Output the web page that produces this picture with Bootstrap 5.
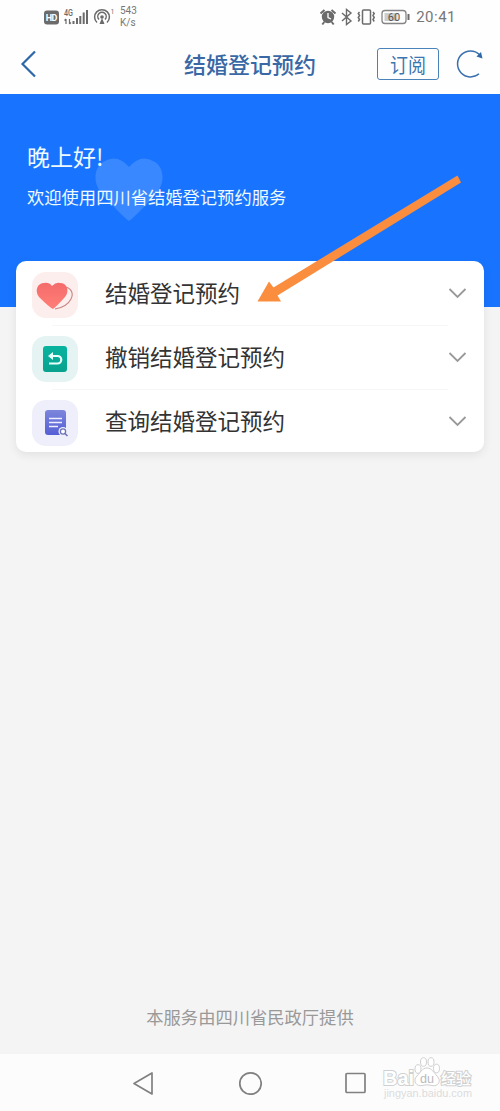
<!DOCTYPE html>
<html lang="zh-CN">
<head>
<meta charset="utf-8">
<meta name="viewport" content="width=device-width, initial-scale=1">
<title>结婚登记预约</title>
<link href="https://cdn.jsdelivr.net/npm/bootstrap@5.3.0/dist/css/bootstrap.min.css" rel="stylesheet">
<style>
body{font-family:"Liberation Sans","Noto Sans CJK SC",sans-serif;background:#f4f4f4;height:1111px;overflow:hidden}
.cjk{font-family:"Noto Sans CJK SC",sans-serif}
svg{display:block;flex:none}
.status{height:34px;padding:0 44px 0 43px;background:#fefefe;color:#777;font-family:Roboto,sans-serif}
.speed{font-size:10px;line-height:12px;padding-left:6px}
.clock{font-size:15px;letter-spacing:.5px;line-height:34px;padding-left:5px}
.topbar{height:60px;background:#fefefe;padding:0 16px 0 20px;color:#316aad}
.page-title{font-size:22px;font-weight:500;line-height:58px;height:60px;margin-left:148px;color:#3968a5}
.sub-btn{width:62px;height:32px;border:1.5px solid #4a83b8;border-radius:3px;color:#3a76b0;font-size:18px;line-height:28px;padding:0;margin-left:61px;margin-right:15px}
.sub-btn span{display:inline-block;transform:scaleY(1.12)}
.hero{height:213px;background:#1874ff;color:#eefaff;padding:44px 27px 0}
.hero h1{font-size:23px;line-height:36px;font-weight:400;margin:0}
.hero p{font-size:17.3px;line-height:26px;margin:10px 0 0}
.heart-bg{left:94px;top:62px}
.svc{margin:-46px 16px 0;border:0;border-radius:10px;box-shadow:0 3px 10px rgba(0,0,0,.08);height:191px;z-index:1}
.svc-row{height:64px;padding:0 17px 0 16px;color:#333;font-size:22.5px}
.svc-row span{line-height:62px;height:64px}
.svc-row+.svc-row{background:linear-gradient(#f7f7f7,#f7f7f7) 36px 0/396px 1px no-repeat}
.tile{width:46px;height:46px;border-radius:14px;margin:4px 27px 0 0}
.t-red{background:#fceeed}.t-green{background:#e5f4f3}.t-blue{background:#eeeffa}
.pointer{left:250px;top:170px;z-index:3;pointer-events:none}
.provider{font-size:17.3px;line-height:26px;color:#999;margin-bottom:24px}
.sysnav{height:57px;background:#fcfcfc}
.sysnav .keys{padding-left:132px;gap:83.5px;height:57px}
.wmark{left:379px;bottom:8px}
</style>
</head>
<body class="d-flex flex-column position-relative">
<div class="status d-flex align-items-center">
  <svg width="71" height="34" viewBox="43 0 71 34" fill="none" stroke="#6b6b6b">
    <rect x="44" y="10.500" width="15" height="14" rx="3" fill="#6b6b6b" stroke="none"/>
    <text x="45.800" y="21" font-size="9" font-weight="700" fill="#fff" stroke="none" textLength="11.5">HD</text>
    <text x="64" y="16" font-size="8.500" font-weight="500" fill="#6b6b6b" stroke="none" textLength="9" lengthAdjust="spacingAndGlyphs">4G</text>
    <path d="M66 24v-5m-1.500 1.500L66 19m3.500 0v5m1.500-1.500L69.500 24" stroke-width="1.200"/>
    <path d="M73.500 24v-3M77 24v-6M80.300 24v-8M83.700 24V12.500M87 24V10" stroke-width="2"/>
    <path d="M97 22.500a7.400 7.400 0 1 1 10 0M99 19.500a4.200 4.200 0 1 1 6 0" stroke-width="1.500"/>
    <circle cx="102" cy="17" r="1.800" fill="#6b6b6b" stroke="none"/><path d="M102 18l-2.500 6h5z" fill="#6b6b6b" stroke="none"/>
    <text x="110.500" y="14" font-size="7" fill="#777" stroke="none">1</text>
  </svg>
  <div class="speed">543<br>K/s</div>
  <svg class="ms-auto" width="93" height="34" viewBox="317.500 0 93 34" fill="none" stroke="#6b6b6b" stroke-width="1.500">
    <circle cx="327.500" cy="17" r="6.200" fill="#6b6b6b" stroke="none"/><path d="M320 13.500l4-3.500m11 3.500l-4-3.500m-7.200 12l-2 2.500m9.400-2.500l2 2.500" stroke-width="2"/><path d="M327.500 13v4.500l3 1.500" stroke="#fff" stroke-width="1.300"/>
    <path d="M341.500 13l9 8-4.500 3.500V9.500l4.500 3.500-9 8" stroke-width="1.400"/>
    <rect x="362" y="10" width="8" height="14" rx="1"/><path d="M359 12l-1.200 1.500 1.200 2-1.200 2 1.200 2-1.200 2m14.700-9.500l1.200 1.500-1.200 2 1.200 2-1.200 2 1.200 2" stroke-width="1.500"/>
    <rect x="381.500" y="10.500" width="24" height="13" rx="3" stroke="#858585" stroke-width="1.300"/><rect x="384" y="13" width="13" height="8" fill="#ccc" stroke="none"/>
    <text x="387.300" y="21" font-size="11" fill="#555" stroke="none">60</text><path d="M408 14v6" stroke-width="2"/>
  </svg>
  <div class="clock">20:41</div>
</div>
<header class="topbar d-flex align-items-center">
  <svg width="16" height="30" viewBox="0 0 16 30" fill="none" stroke="#2e68a8" stroke-width="2.200"><path d="M15 2.500L2.500 15 15 27.500"/></svg>
  <div class="page-title cjk text-nowrap">结婚登记预约</div>
  <button class="btn sub-btn cjk"><span>订阅</span></button>
  <svg width="30" height="32" viewBox="454 48 30 32"><path d="M479.500 54.500A13 13 0 1 0 479 73.800" fill="none" stroke="#3a70ad" stroke-width="1.500"/><path d="M476.500 56.500l4.500-4.500 1.500 6.500z" fill="#2e68a8"/></svg>
</header>
<section class="hero position-relative cjk">
  <svg class="heart-bg position-absolute" width="70" height="66" viewBox="0 0 70 66"><path d="M35 65Q29 61 9 39C-2 27 0 12 9 6Q23-3 35 11Q47-3 61 6C70 12 72 27 61 39Q41 61 35 65Z" fill="#fff" fill-opacity=".15"/></svg>
  <h1 class="position-relative">晚上好!</h1>
  <p class="position-relative text-nowrap">欢迎使用四川省结婚登记预约服务</p>
</section>
<main class="card svc cjk">
  <div class="svc-row d-flex align-items-center">
    <svg class="tile t-red" viewBox="0 0 46 46"><defs><linearGradient id="gr" x2="0" y2="1"><stop stop-color="#f46c6a"/><stop offset="1" stop-color="#ff7f78"/></linearGradient></defs><path d="M33 15C39 16 42 21 39 27Q35 35 23 37" fill="none" stroke="#c98582" stroke-width="1.100"/><path d="M21 37Q17 35 7 25C2 18 6 11 12 11Q17 10 20 14Q24 10 28 11C35 11 38 19 33 25Q25 34 21 37Z" fill="url(#gr)"/></svg>
    <span>结婚登记预约</span>
    <svg class="ms-auto" width="19" height="12" viewBox="0 0 19 12" fill="none" stroke="#999" stroke-width="1.800"><path d="M1.500 2l8 8 8-8"/></svg>
  </div>
  <div class="svc-row d-flex align-items-center">
    <svg class="tile t-green" viewBox="0 0 46 46"><defs><linearGradient id="gg" x2="0" y2="1"><stop stop-color="#08b49f"/><stop offset="1" stop-color="#08a28e"/></linearGradient></defs><rect x="11" y="10" width="24" height="26" rx="3" fill="url(#gg)"/><path d="M18 20H25.500a3.500 3.500 0 0 1 0 7.500H17" fill="none" stroke="#e8fffb" stroke-width="2.200"/><path d="M16 20l5-4v8z" fill="#e8fffb"/></svg>
    <span>撤销结婚登记预约</span>
    <svg class="ms-auto" width="19" height="12" viewBox="0 0 19 12" fill="none" stroke="#999" stroke-width="1.800"><path d="M1.500 2l8 8 8-8"/></svg>
  </div>
  <div class="svc-row d-flex align-items-center">
    <svg class="tile t-blue" viewBox="0 0 46 46"><defs><linearGradient id="gb" x2="0" y2="1"><stop stop-color="#7c86dc"/><stop offset="1" stop-color="#555fd5"/></linearGradient></defs><rect x="13" y="10" width="21" height="25" rx="3" fill="url(#gb)"/><path d="M17 18.500h13M17 22.500h13M17 26.500h9" stroke="#eef" stroke-width="1.600"/><circle cx="31" cy="31.500" r="4.500" fill="#eeeffa"/><circle cx="31" cy="31.500" r="2.600" fill="#fff" stroke="#6a72b8" stroke-width="1.300"/><path d="M33 33.500l2.500 2.500" stroke="#6a72b8" stroke-width="1.500"/></svg>
    <span>查询结婚登记预约</span>
    <svg class="ms-auto" width="19" height="12" viewBox="0 0 19 12" fill="none" stroke="#999" stroke-width="1.800"><path d="M1.500 2l8 8 8-8"/></svg>
  </div>
</main>
<svg class="pointer position-absolute" width="220" height="140" viewBox="250 170 220 140"><path d="M457.500 175.500L461 182.500 277.500 295.500 281 301.500H257.500L269 281.500 273.500 287.500Z" fill="#fa8d3e"/></svg>
<div class="provider cjk mt-auto text-center">本服务由四川省民政厅提供</div>
<footer class="sysnav position-relative">
  <div class="keys d-flex align-items-center">
    <svg width="22" height="24" viewBox="0 0 22 24" fill="none" stroke="#808080" stroke-width="1.700" stroke-linejoin="round"><path d="M20 2v21L2 12.500z"/></svg>
    <svg width="24" height="24" viewBox="0 0 24 24" fill="none" stroke="#808080" stroke-width="1.700"><circle cx="12.500" cy="12.500" r="10.700"/></svg>
    <svg width="22" height="24" viewBox="0 0 22 24" fill="none" stroke="#808080" stroke-width="1.700"><rect x="1" y="2.500" width="19" height="19" rx="1"/></svg>
  </div>
  <svg class="wmark position-absolute" width="98" height="46" viewBox="379 1057 98 46" font-family="Liberation Sans, Noto Sans CJK SC, sans-serif" fill="#fff" stroke="#d0d0d0" stroke-width="1">
    <text x="383" y="1085" font-size="21" font-weight="700" textLength="31" lengthAdjust="spacingAndGlyphs" stroke-width="2" paint-order="stroke">Bai</text>
    <path d="M427 1068C422 1068 420 1073 417 1076C412 1081 417 1087 422 1085.500Q427 1084 432 1085.500C438 1087 442 1081 437 1076C434 1073 432 1068 427 1068Z"/>
    <ellipse cx="418" cy="1069" rx="3" ry="4.300"/><ellipse cx="423.500" cy="1062" rx="3" ry="4.300"/><ellipse cx="431" cy="1062" rx="3" ry="4.300"/><ellipse cx="436.500" cy="1068.500" rx="3" ry="4.300"/>
    <text x="420" y="1083" font-size="13" textLength="14" lengthAdjust="spacingAndGlyphs" fill="#bbb" stroke="none">du</text>
    <text x="441" y="1084" font-size="15" font-weight="500" textLength="30" stroke-width="2" paint-order="stroke">经验</text>
    <text x="384" y="1097" font-size="10" stroke="none" fill="#dcdcdc" textLength="88" lengthAdjust="spacingAndGlyphs">jingyan.baidu.com</text>
  </svg>
</footer>
<script src="https://cdn.jsdelivr.net/npm/bootstrap@5.3.0/dist/js/bootstrap.bundle.min.js"></script>
</body>
</html>
